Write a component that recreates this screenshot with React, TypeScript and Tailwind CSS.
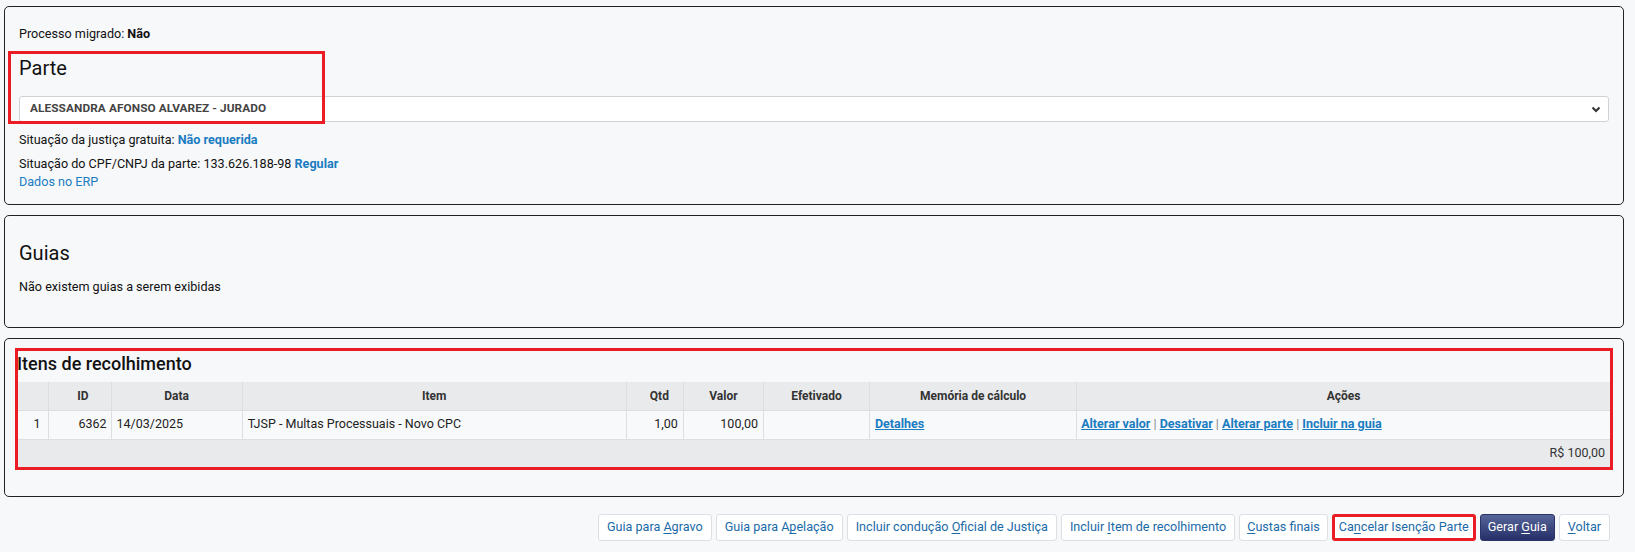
import React from 'react'

const COLS = [30, 63, 131, 384, 57, 80, 106, 207, 533]

const BUTTONS: { pre: string; key: string; post: string; px: string }[] = [
  { pre: 'Guia para ', key: 'A', post: 'gravo', px: 'px-[8px]' },
  { pre: 'Guia para A', key: 'p', post: 'elação', px: 'px-[8px]' },
  { pre: 'Incluir condução ', key: 'O', post: 'ficial de Justiça', px: 'px-[8px]' },
  { pre: 'Incluir ', key: 'I', post: 'tem de recolhimento', px: 'px-[8px]' },
  { pre: '', key: 'C', post: 'ustas finais', px: 'px-[7px]' },
]

function Panel({ className = '', children }: { className?: string; children: React.ReactNode }) {
  return (
    <div className={`relative border border-[#222] rounded-[5px] bg-[#f7f8fa] ${className}`}>{children}</div>
  )
}

function Btn({ pre, k, post, className = '' }: { pre: string; k: string; post: string; className?: string }) {
  return (
    <button
      className={`h-[27px] rounded-[3px] bg-white text-[12.6px] text-[#1b6aa8] leading-none ${className}`}
    >
      {pre}
      <u className="underline-offset-2">{k}</u>
      {post}
    </button>
  )
}

export default function App() {
  return (
    <div className="min-h-[552px] bg-[#f7f8fa] text-[12.6px] text-[#111] font-['Roboto',sans-serif] pt-[6px] pl-[4px] pr-[11px]">
      {/* Parte */}
      <Panel className="pt-[18px] pb-[13px] px-[14px]">
        <div className="leading-[18px]">
          Processo migrado: <b>Não</b>
        </div>
        <h2 className="text-[20px] leading-[24px] mt-[13px]">Parte</h2>
        <div className="relative mt-[16px] h-[26px] bg-white border border-[#cfd3d8] rounded-[3px] flex items-center pl-[10px] pr-[6px]">
          <span className="flex-1 font-bold text-[11.8px] text-[#444] tracking-[0.1px]">ALESSANDRA AFONSO ALVAREZ - JURADO</span>
          <svg width="12" height="12" viewBox="0 0 12 12" aria-hidden="true">
            <path d="M2.5 4.5 6 8l3.5-3.5" fill="none" stroke="#333" strokeWidth="2" />
          </svg>
        </div>
        <div className="leading-[18px] mt-[9px]">
          Situação da justiça gratuita: <b className="text-[#1a7cc1]">Não requerida</b>
        </div>
        <div className="leading-[18px] mt-[6px]">
          Situação do CPF/CNPJ da parte: 133.626.188-98 <b className="text-[#1a7cc1]">Regular</b>
        </div>
        <div className="leading-[18px] text-[#1a7cc1]">Dados no ERP</div>
        <div className="absolute left-[3px] top-[44px] w-[317px] h-[73px] border-[3px] border-[#ec1c24] pointer-events-none" />
      </Panel>

      {/* Guias */}
      <Panel className="mt-[10px] h-[113px] pt-[25px] px-[14px]">
        <h2 className="text-[20px] leading-[24px]">Guias</h2>
        <div className="leading-[18px] mt-[13px]">Não existem guias a serem exibidas</div>
      </Panel>

      {/* Itens */}
      <Panel className="mt-[10px] h-[159px] pt-[9px] pl-[10px] pr-[10px]">
        <div className="border-[3px] border-[#ec1c24]">
          <h2 className="text-[18px] font-medium leading-[22px] mt-[2px] ml-[-1px]">Itens de recolhimento</h2>
          <table className="table-fixed border-collapse mt-[7px] w-full text-[12.5px]">
            <colgroup>
              {COLS.map((w, i) => (
                <col key={i} style={{ width: w }} />
              ))}
            </colgroup>
            <thead>
              <tr className="bg-[#e9eaec] h-[28px] text-[#333] text-[12px]">
                {['', 'ID', 'Data', 'Item', 'Qtd', 'Valor', 'Efetivado', 'Memória de cálculo', 'Ações'].map((h, i) => (
                  <th key={i} className={`font-bold border border-[#dcdee1] ${i === 0 ? 'border-l-0' : ''} ${i === 8 ? 'border-r-0' : ''} ${i === 1 ? 'text-right pr-[22px]' : i === 4 ? 'text-right pr-[14px]' : 'text-center'} border-t-0`}>
                    {h}
                  </th>
                ))}
              </tr>
            </thead>
            <tbody>
              <tr className="bg-[#f8f9fa] h-[29px] text-[#222]">
                <td className="border border-l-0 border-[#dcdee1] text-right pr-[7px]">1</td>
                <td className="border border-[#dcdee1] text-right pr-[4px]">6362</td>
                <td className="border border-[#dcdee1] pl-[5px]">14/03/2025</td>
                <td className="border border-[#dcdee1] pl-[5px]">TJSP - Multas Processuais - Novo CPC</td>
                <td className="border border-[#dcdee1] text-right pr-[5px]">1,00</td>
                <td className="border border-[#dcdee1] text-right pr-[5px]">100,00</td>
                <td className="border border-[#dcdee1]"></td>
                <td className="border border-[#dcdee1] pl-[5px]">
                  <a className="font-bold underline text-[#1a7cc1]">Detalhes</a>
                </td>
                <td className="border border-r-0 border-[#dcdee1] pl-[4px] text-[#888]">
                  <a className="font-bold underline text-[#1a7cc1]">Alterar valor</a> |{' '}
                  <a className="font-bold underline text-[#1a7cc1]">Desativar</a> |{' '}
                  <a className="font-bold underline text-[#1a7cc1]">Alterar parte</a> |{' '}
                  <a className="font-bold underline text-[#1a7cc1]">Incluir na guia</a>
                </td>
              </tr>
              <tr className="bg-[#e9eaec] h-[28px]">
                <td colSpan={9} className="text-right pr-[5px] text-[#333]">
                  R$ 100,00
                </td>
              </tr>
            </tbody>
          </table>
        </div>
      </Panel>

      {/* Botões */}
      <div className="flex justify-end gap-[4px] mt-[17px] pr-[14px]">
        {BUTTONS.map((b) => (
          <Btn key={b.post} pre={b.pre} k={b.key} post={b.post} className={`border border-[#dcdfe3] ${b.px}`} />
        ))}
        <Btn pre="Ca" k="n" post="celar Isenção Parte" className="border-[3px] border-[#ec1c24] px-[4px]" />
        <button className="h-[27px] px-[7px] rounded-[3px] text-[12.6px] text-white leading-none bg-gradient-to-b from-[#56669a] to-[#262f68] border border-[#2b3466]">
          Gerar <u className="underline-offset-2">G</u>uia
        </button>
        <Btn pre="" k="V" post="oltar" className="border border-[#dcdfe3] px-[8px]" />
      </div>
    </div>
  )
}
